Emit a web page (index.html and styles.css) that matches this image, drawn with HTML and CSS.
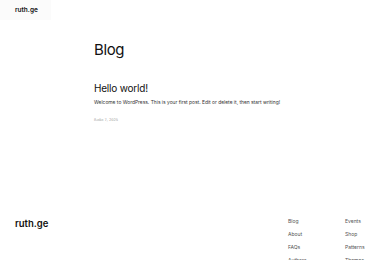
FILE: index.html
```html
<!DOCTYPE html>
<html lang="en">
<head>
<meta charset="utf-8">
<title>Blog – ruth.ge</title>
<link rel="stylesheet" href="styles.css">
</head>
<body>
<header class="site-header">
  <div class="brand-box"><a class="brand" href="#">ruth.ge</a></div>
</header>
<main class="main">
  <h1 class="page-title">Blog</h1>
  <article class="post">
    <h2 class="post-title">Hello world!</h2>
    <p class="post-excerpt">Welcome to WordPress. This is your first post. Edit or delete it, then start writing!</p>
    <p class="post-date">მაისი 7, 2025</p>
  </article>
</main>
<footer class="site-footer">
  <a class="footer-brand" href="#">ruth.ge</a>
  <nav class="footer-nav">
    <ul class="nav-col">
      <li>Blog</li>
      <li>About</li>
      <li>FAQs</li>
      <li>Authors</li>
    </ul>
    <ul class="nav-col">
      <li>Events</li>
      <li>Shop</li>
      <li>Patterns</li>
      <li>Themes</li>
    </ul>
  </nav>
</footer>
</body>
</html>
```

FILE: styles.css
```css
* { box-sizing: border-box; }
html, body { margin: 0; padding: 0; }
body {
  width: 380px;
  height: 260px;
  overflow: hidden;
  background: #ffffff;
  color: #111111;
  font-family: Inter, "Noto Sans", "DejaVu Sans", sans-serif;
}
a { color: inherit; text-decoration: none; }

.site-header {
  height: 22px;
}
.brand-box {
  width: fit-content;
  background: #fbfbfb;
  padding: 6px 13px 5px 15px;
  font-size: 6.5px;
  line-height: 9px;
}
.brand {
  font-weight: 600;
  color: #111;
}

.main {
  width: 192px;
  margin: 0 auto;
}
.page-title {
  margin: 18px 0 0;
  font-size: 15px;
  font-weight: 400;
  letter-spacing: -0.4px;
  line-height: 20px;
  color: #111;
}
.post {
  margin-top: 21px;
}
.post-title {
  margin: 0;
  font-size: 10px;
  font-weight: 400;
  letter-spacing: -0.2px;
  line-height: 14px;
  color: #111;
}
.post-excerpt {
  margin: 4px 0 0;
  font-size: 4.9px;
  line-height: 7px;
  color: #333;
}
.post-date {
  margin: 11px 0 0;
  font-family: "DejaVu Sans", Inter, sans-serif;
  font-size: 3.6px;
  line-height: 6px;
  color: #999;
}

.site-footer {
  display: flex;
  justify-content: space-between;
  align-items: flex-start;
  padding: 0 15px;
  margin-top: 95px;
}
.footer-brand {
  font-size: 9.5px;
  font-weight: 600;
  line-height: 12px;
  color: #111;
}
.footer-nav {
  display: flex;
  gap: 37px;
}
.nav-col {
  list-style: none;
  margin: 0;
  padding: 0;
  display: flex;
  flex-direction: column;
  gap: 6px;
  width: 20px;
}
.nav-col li {
  font-size: 5px;
  line-height: 7px;
  color: #555;
  white-space: nowrap;
}
```
